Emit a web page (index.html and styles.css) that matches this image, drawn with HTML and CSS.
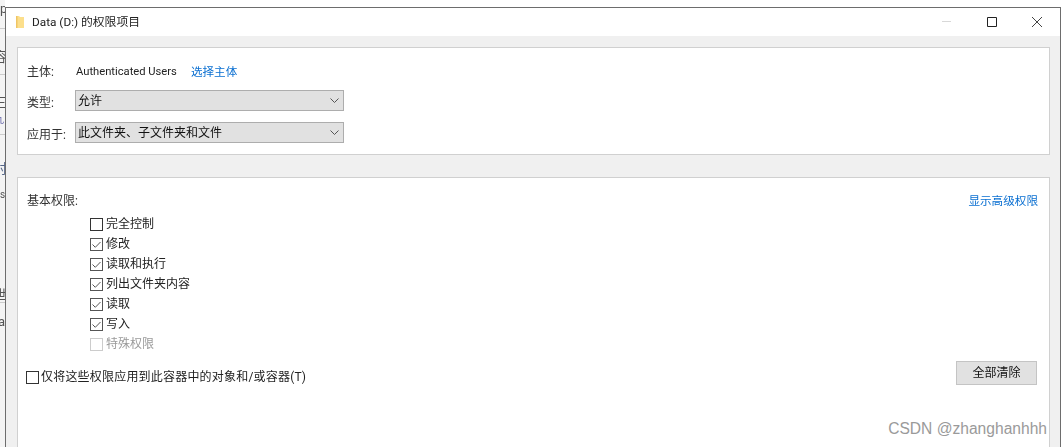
FILE: index.html
```html
<!DOCTYPE html>
<html lang="zh-CN">
<head>
<meta charset="utf-8">
<title>Data (D:) 的权限项目</title>
<link rel="stylesheet" href="styles.css">
</head>
<body>
<div class="desktop">
  <span class="scrap scrap-p">p</span>
  <span class="scrap scrap-a">容</span>
  <span class="scrap scrap-b">三</span>
  <span class="scrap scrap-c">九</span>
  <span class="scrap scrap-d">村</span>
  <span class="scrap scrap-e">s</span>
  <span class="scrap scrap-f">世</span>
  <span class="scrap scrap-g">a</span>
  <span class="rule rule-1"></span>
  <span class="rule rule-2"></span>
  <span class="rule rule-3"></span>
  <span class="rule rule-4"></span>
</div>
<main class="window">
  <header class="titlebar">
    <svg class="folder" viewBox="0 0 8 12" width="8" height="12" aria-hidden="true">
      <path d="M0 0h3l1 1h4v11H0z" fill="#fcdf8c"/>
      <path d="M0 0h1.500v12H0z" fill="#efc565"/>
    </svg>
    <h1 class="title">Data (D:) 的权限项目</h1>
    <div class="controls">
      <svg class="ctl" viewBox="0 0 12 12" width="12" height="12" aria-hidden="true"><path d="M1 5.500h9" stroke="#d8d8d8" fill="none"/></svg>
      <svg class="ctl" viewBox="0 0 12 12" width="12" height="12" aria-hidden="true"><path d="M1.500 1.500h9v9h-9z" stroke="#222" fill="none"/></svg>
      <svg class="ctl" viewBox="0 0 12 12" width="12" height="12" aria-hidden="true"><path d="M1 1l10 10M11 1L1 11" stroke="#444" fill="none"/></svg>
    </div>
  </header>
  <div class="content">
    <section class="panel panel-top">
      <div class="row principal">
        <span class="label">主体:</span>
        <span class="user">Authenticated Users</span>
        <a class="link">选择主体</a>
      </div>
      <div class="row type">
        <span class="label">类型:</span>
        <div class="select">允许
          <svg class="chev" viewBox="0 0 9 5" width="9" height="5" aria-hidden="true"><path d="M.5.500l4 4 4-4" stroke="#555" fill="none"/></svg>
        </div>
      </div>
      <div class="row apply">
        <span class="label">应用于:</span>
        <div class="select">此文件夹、子文件夹和文件
          <svg class="chev" viewBox="0 0 9 5" width="9" height="5" aria-hidden="true"><path d="M.5.500l4 4 4-4" stroke="#555" fill="none"/></svg>
        </div>
      </div>
    </section>
    <section class="panel panel-perms">
      <div class="perm-head">
        <span class="label">基本权限:</span>
        <a class="link">显示高级权限</a>
      </div>
      <ul class="perms">
        <li class="perm"><span class="box"></span>完全控制</li>
        <li class="perm"><span class="box on"><svg viewBox="0 0 13 13" width="13" height="13" aria-hidden="true"><path d="M2.500 6.500l2.800 2.800 5.200-5.300" stroke="#555" fill="none"/></svg></span>修改</li>
        <li class="perm"><span class="box on"><svg viewBox="0 0 13 13" width="13" height="13" aria-hidden="true"><path d="M2.500 6.500l2.800 2.800 5.200-5.300" stroke="#555" fill="none"/></svg></span>读取和执行</li>
        <li class="perm"><span class="box on"><svg viewBox="0 0 13 13" width="13" height="13" aria-hidden="true"><path d="M2.500 6.500l2.800 2.800 5.200-5.300" stroke="#555" fill="none"/></svg></span>列出文件夹内容</li>
        <li class="perm"><span class="box on"><svg viewBox="0 0 13 13" width="13" height="13" aria-hidden="true"><path d="M2.500 6.500l2.800 2.800 5.200-5.300" stroke="#555" fill="none"/></svg></span>读取</li>
        <li class="perm"><span class="box on"><svg viewBox="0 0 13 13" width="13" height="13" aria-hidden="true"><path d="M2.500 6.500l2.800 2.800 5.200-5.300" stroke="#555" fill="none"/></svg></span>写入</li>
        <li class="perm off"><span class="box"></span>特殊权限</li>
      </ul>
      <div class="foot">
        <label class="only"><span class="box"></span>仅将这些权限应用到此容器中的对象和/或容器(T)</label>
        <button class="clear" type="button">全部清除</button>
      </div>
    </section>
  </div>
</main>
<div class="mark">CSDN @zhanghanhhh</div>
</body>
</html>
```
FILE: styles.css
```css
* { box-sizing: border-box; }
html, body { margin: 0; height: 100%; }
body {
  position: relative;
  width: 1061px;
  height: 447px;
  overflow: hidden;
  background: #fff;
  color: #222;
  font: 12px/16px Roboto, "Noto Sans CJK SC", sans-serif;
}
.desktop { position: absolute; inset: 0 auto 0 0; width: 5px; overflow: hidden; background: #f4f4f4; filter: blur(0.4px); }
.scrap { position: absolute; left: -6px; font-size: 13px; line-height: 14px; color: #555; }
.scrap-p { top: 2px; left: 0; }
.scrap-a { top: 50px; }
.scrap-b { top: 96px; }
.scrap-c { top: 113px; font-size: 10px; color: #66a; }
.scrap-d { top: 162px; color: #568; }
.scrap-e { top: 188px; left: 0; font-size: 10px; }
.scrap-f { top: 288px; }
.scrap-g { top: 315px; left: -2px; }
.rule { position: absolute; left: 0; width: 5px; height: 1px; background: #ccc; }
.rule-1 { top: 28px; }
.rule-2 { top: 74px; }
.rule-3 { top: 134px; }
.rule-4 { top: 302px; }

.window {
  position: absolute;
  left: 5px;
  top: 7px;
  width: 1056px;
  height: 440px;
  display: flex;
  flex-direction: column;
  border-top: 1px solid #6d6d6d;
  border-left: 1px solid #6d6d6d;
  border-right: 1px solid #6d6d6d;
  background: #f0f0f0;
  filter: blur(0.3px);
}
.titlebar {
  flex: none;
  height: 28px;
  display: flex;
  align-items: center;
  padding-left: 10px;
  background: #fff;
}
.folder { flex: none; margin-top: -1px; }
.title {
  margin: 0 0 0 8px;
  font-size: 11.8px;
  font-weight: 400;
  color: #222;
}
.controls { margin-left: auto; display: flex; gap: 33px; padding-right: 17px; }
.ctl { display: block; }

.content {
  flex: 1;
  display: flex;
  flex-direction: column;
  gap: 22px;
  padding: 11px 10px 0 11px;
}
.panel { background: #fff; border: 1px solid #d0d0d0; }
.panel-top { height: 108px; padding: 14px 9px 0; }
.panel-perms { flex: 1; border-bottom: 0; padding: 14px 9px 0; }
.row { display: flex; align-items: center; }
.label { color: #333; }
.principal { height: 20px; }
.principal .label { width: 49px; }
.user { margin-right: 14px; font-size: 11.2px; }
.link { color: #0a6fd1; font-size: 11.6px; }
.type { margin-top: 8px; }
.apply { margin-top: 11px; }
.type .label, .apply .label { width: 48px; padding-top: 4px; }
.select {
  width: 269px;
  height: 21px;
  display: flex;
  align-items: center;
  justify-content: space-between;
  padding: 0 4px 0 2px;
  background: #e1e1e1;
  border: 1px solid #adadad;
  color: #111;
}
.chev { flex: none; }

.perm-head { display: flex; justify-content: space-between; padding: 1px 2px 0 0; height: 16px; }
.perms { margin: 6px 0 0; padding: 0 0 0 63px; list-style: none; }
.perm { height: 20px; display: flex; align-items: center; gap: 3px; }
.perm.off { color: #9a9a9a; }
.box {
  flex: none;
  display: block;
  width: 13px;
  height: 13px;
  background: #fff;
  border: 1px solid #333;
  position: relative;
}
.box.on { border-color: #555; }
.box.on svg { display: block; margin: -1px; }
.perm.off .box { border-color: #ccc; }
.foot { display: flex; align-items: flex-start; justify-content: space-between; padding-right: 3px; margin: 7px 0 0 -1px; }
.only { display: flex; align-items: center; gap: 2px; margin-top: 8px; letter-spacing: 0.2px; }
.clear {
  width: 81px;
  height: 24px;
  padding: 0;
  background: #e1e1e1;
  border: 1px solid #c4c4c4;
  color: #111;
  font: inherit;
}
.mark {
  position: absolute;
  right: 14px;
  top: 420px;
  color: #9a9a9a;
  font: 15.6px/18px "Liberation Sans", sans-serif;
}
```
